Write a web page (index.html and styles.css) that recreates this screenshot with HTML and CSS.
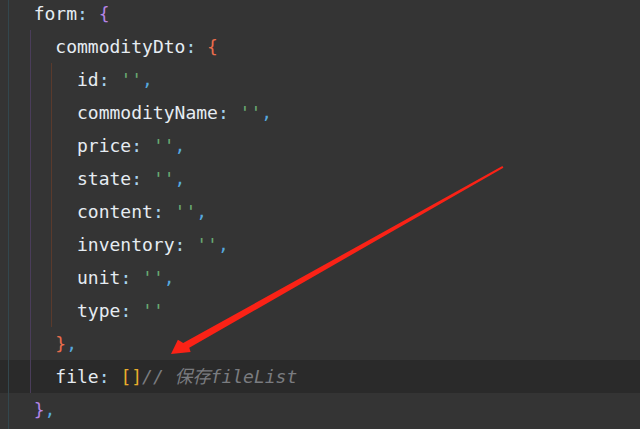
FILE: index.html
```html
<!DOCTYPE html>
<html lang="zh">
<head>
<meta charset="utf-8">
<title>code</title>
<link rel="stylesheet" href="styles.css">
</head>
<body>
<div class="code">
  <div class="blk g0">
    <div class="ln"><span class="k">form</span><span class="c">:</span> <span class="b1">{</span></div>
    <div class="blk g1">
      <div class="ln"><span class="k">commodityDto</span><span class="c">:</span> <span class="b2">{</span></div>
      <div class="blk g2">
        <div class="ln"><span class="k">id</span><span class="c">:</span> <span class="s">''</span><span class="cm">,</span></div>
        <div class="ln"><span class="k">commodityName</span><span class="c">:</span> <span class="s">''</span><span class="cm">,</span></div>
        <div class="ln"><span class="k">price</span><span class="c">:</span> <span class="s">''</span><span class="cm">,</span></div>
        <div class="ln"><span class="k">state</span><span class="c">:</span> <span class="s">''</span><span class="cm">,</span></div>
        <div class="ln"><span class="k">content</span><span class="c">:</span> <span class="s">''</span><span class="cm">,</span></div>
        <div class="ln"><span class="k">inventory</span><span class="c">:</span> <span class="s">''</span><span class="cm">,</span></div>
        <div class="ln"><span class="k">unit</span><span class="c">:</span> <span class="s">''</span><span class="cm">,</span></div>
        <div class="ln"><span class="k">type</span><span class="c">:</span> <span class="s">''</span></div>
      </div>
      <div class="ln"><span class="b2">}</span><span class="cm">,</span></div>
      <div class="ln"><span class="k">file</span><span class="c">:</span> <span class="b3">[]</span><span class="com">// 保存fileList</span></div>
    </div>
    <div class="ln"><span class="b1">}</span><span class="cm">,</span></div>
  </div>
</div>
<svg class="arrow" width="640" height="429" viewBox="0 0 640 429" xmlns="http://www.w3.org/2000/svg">
  <polygon points="171,354 177.9,339.8 183.2,343.1 502.4,166 503.4,167.8 189.3,347.7 190.6,352.1" fill="#fa2216"/>
</svg>
</body>
</html>
```
FILE: styles.css
```css
html, body {
  margin: 0;
  padding: 0;
  width: 640px;
  height: 429px;
  overflow: hidden;
  background: #343434;
}
body {
  position: relative;
  font-family: "DejaVu Sans Mono", "Liberation Mono", "Noto Sans CJK SC", monospace;
  font-size: 18px;
  color: #e6ecf2;
}
.code {
  margin-top: -3px;
  padding-left: 8px;
  height: 440px;
  background: linear-gradient(#2a2a2a, #2a2a2a) 0 363px / 100% 33px no-repeat, #343434;
}
.blk {
  margin-left: -4px;
  padding-left: calc(2ch + 4px);
  background-repeat: no-repeat;
  background-position: 0 0;
  background-size: 1px 100%;
}
.g0 {
  margin-left: 0;
  min-height: 440px;
  background-image: linear-gradient(#33474e, #33474e);
}
.g1 { background-image: linear-gradient(#4a3d5a, #4a3d5a); }
.g2 { background-image: linear-gradient(#5a3a2c, #5a3a2c); }
.ln {
  height: 33px;
  line-height: 33px;
  white-space: pre;
}
.k { color: #e6ecf2; }
.c { color: #a9d4f0; }
.s { color: #6aab73; }
.cm { color: #56a8de; }
.b1 { color: #b584e6; }
.b2 { color: #ea6d4c; }
.b3 { color: #e8ad2c; }
.com {
  color: #7a7c80;
  font-style: italic;
}
.com { font-family: "DejaVu Sans Mono", "Noto Sans CJK SC", monospace; }
.arrow {
  position: absolute;
  left: 0;
  top: 0;
}
```
